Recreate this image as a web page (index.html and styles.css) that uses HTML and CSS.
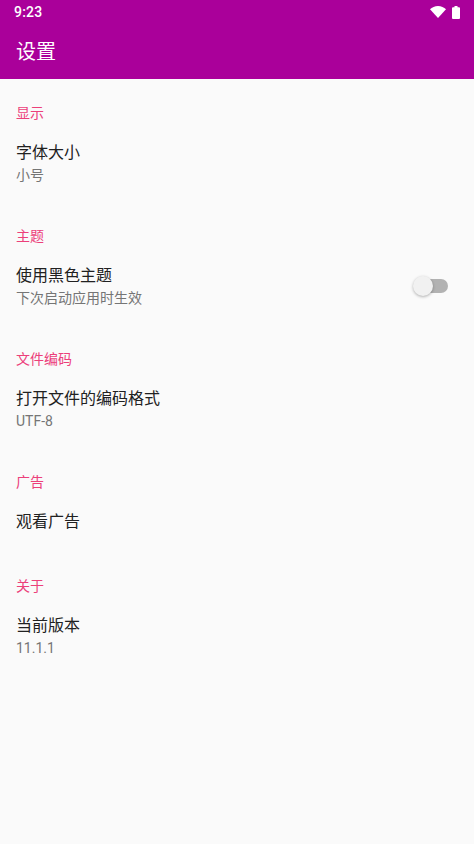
FILE: index.html
```html
<!DOCTYPE html>
<html lang="zh-CN">
<head>
<meta charset="utf-8">
<title>设置</title>
<link rel="stylesheet" href="styles.css">
</head>
<body>
<header class="appbar">
  <div class="statusbar">
    <span class="time">9:23</span>
    <span class="status-icons">
      <svg class="wifi" width="16" height="12" viewBox="0 0 16 12"><path d="M0 3.2C2 1.3 4.8 0 8 0s6 1.3 8 3.2L8 12z" fill="#fff"/></svg>
      <svg class="battery" width="8" height="13" viewBox="0 0 8 13"><path d="M2.5 0h3v1.2H7a1 1 0 0 1 1 1V12a1 1 0 0 1-1 1H1a1 1 0 0 1-1-1V2.200a1 1 0 0 1 1-1h1.500z" fill="#fff"/></svg>
    </span>
  </div>
  <div class="toolbar"><h1 class="title">设置</h1></div>
</header>
<main class="list">
  <section class="group">
    <h2 class="category">显示</h2>
    <div class="pref"><div class="pref-text"><div class="pref-title">字体大小</div><div class="pref-summary">小号</div></div></div>
  </section>
  <section class="group">
    <h2 class="category">主题</h2>
    <div class="pref">
      <div class="pref-text"><div class="pref-title">使用黑色主题</div><div class="pref-summary">下次启动应用时生效</div></div>
      <div class="switch"><span class="track"></span><span class="thumb"></span></div>
    </div>
  </section>
  <section class="group">
    <h2 class="category">文件编码</h2>
    <div class="pref"><div class="pref-text"><div class="pref-title">打开文件的编码格式</div><div class="pref-summary">UTF-8</div></div></div>
  </section>
  <section class="group">
    <h2 class="category">广告</h2>
    <div class="pref single"><div class="pref-text"><div class="pref-title">观看广告</div></div></div>
  </section>
  <section class="group">
    <h2 class="category">关于</h2>
    <div class="pref"><div class="pref-text"><div class="pref-title">当前版本</div><div class="pref-summary">11.1.1</div></div></div>
  </section>
</main>
</body>
</html>
```
FILE: styles.css
```css
* { box-sizing: border-box; }
html, body { margin: 0; padding: 0; }
body {
  width: 474px;
  height: 844px;
  overflow: hidden;
  background: #fafafa;
  font-family: Roboto, "Noto Sans CJK SC", sans-serif;
}
.appbar {
  height: 79px;
  background: #aa009a;
  color: #fff;
}
.statusbar {
  height: 24px;
  padding: 0 14px;
  display: flex;
  align-items: center;
  justify-content: space-between;
}
.time { font-size: 14px; font-weight: 500; letter-spacing: 0.2px; }
.status-icons { display: flex; align-items: center; gap: 6px; }
.wifi, .battery { display: block; }
.toolbar {
  height: 55px;
  padding: 0 16px;
  display: flex;
  align-items: center;
}
.title { margin: 0; font-size: 20px; font-weight: 400; line-height: 28px; }
.list { display: flex; flex-direction: column; }
.group { display: flex; flex-direction: column; }
.category {
  margin: 0;
  padding: 24px 16px 0;
  height: 44px;
  font-size: 14px;
  line-height: 20px;
  font-weight: 400;
  color: #ec407a;
}
.pref {
  height: 79px;
  padding: 0 26px 0 16px;
  display: flex;
  align-items: center;
  justify-content: space-between;
}
.pref.single { height: 60px; }
.pref-title { font-size: 16px; line-height: 24px; color: #212121; }
.pref-summary { font-size: 14px; line-height: 20px; color: #757575; }
.switch { position: relative; width: 34px; height: 20px; }
.track {
  position: absolute;
  left: 0; top: 3px;
  width: 34px; height: 14px;
  border-radius: 7px;
  background: #b2b2b2;
}
.thumb {
  position: absolute;
  left: -1px; top: 0;
  width: 20px; height: 20px;
  border-radius: 50%;
  background: #f1f1f1;
  box-shadow: 0 1px 3px rgba(0,0,0,.3);
}
```
